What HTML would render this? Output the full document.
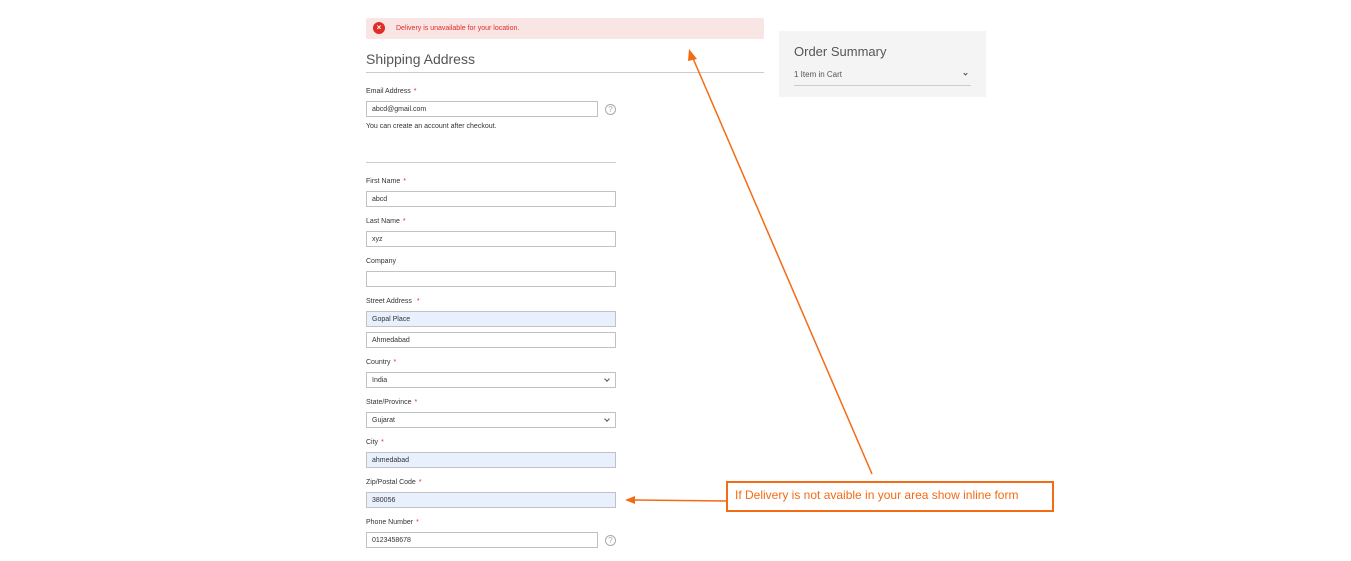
<!DOCTYPE html>
<html><head><meta charset="utf-8"><style>
*{margin:0;padding:0;box-sizing:border-box}
body{width:1351px;height:561px;background:#fff;position:relative;overflow:hidden;font-family:"Liberation Sans",sans-serif;color:#333}
.a{position:absolute}
.lbl{position:absolute;left:366px;font-size:7px;color:#333}
.lbl i{color:#e02b27;font-style:normal;margin-left:3px}
.in{position:absolute;left:366px;width:250px;height:16px;border:1px solid #c2c2c2;background:#fff;font-size:7px;padding-left:5px;display:flex;align-items:center}
.bl{background:#e8f0fe}
.sel:after{content:"";position:absolute;right:6px;top:4px;width:3px;height:3px;border-right:1px solid #555;border-bottom:1px solid #555;transform:rotate(45deg)}
.q{position:absolute;width:11px;height:11px;border:1px solid #aaa;border-radius:50%;font-size:8px;color:#aaa;text-align:center;line-height:9px}
</style></head><body>
<div class="a" style="left:366px;top:18px;width:398px;height:21px;background:#fae5e5;border-radius:2px"></div>
<div class="a" style="left:373px;top:22px;width:12px;height:12px;border-radius:50%;background:#e02b27;color:#fff;font-size:8px;font-weight:bold;text-align:center;line-height:12px">×</div>
<div class="a" style="left:396px;top:25px;font-size:7px;color:#e02b27">Delivery is unavailable for your location.</div>
<div class="a" style="left:366px;top:51px;font-size:14px;color:#555">Shipping Address</div>
<div class="a" style="left:366px;top:72px;width:398px;height:1px;background:#ccc"></div>

<div class="lbl" style="top:88px">Email Address<i>*</i></div>
<div class="in" style="top:101px;width:232px">abcd@gmail.com</div>
<div class="q" style="left:605px;top:104px">?</div>
<div class="lbl" style="top:123px">You can create an account after checkout.</div>
<div class="a" style="left:366px;top:162px;width:250px;height:1px;background:#ccc"></div>

<div class="lbl" style="top:178px">First Name<i>*</i></div>
<div class="in" style="top:191px">abcd</div>
<div class="lbl" style="top:218px">Last Name<i>*</i></div>
<div class="in" style="top:231px">xyz</div>
<div class="lbl" style="top:258px">Company</div>
<div class="in" style="top:271px"></div>
<div class="lbl" style="top:298px">Street Address <i>*</i></div>
<div class="in bl" style="top:311px">Gopal Place</div>
<div class="in" style="top:332px">Ahmedabad</div>
<div class="lbl" style="top:359px">Country<i>*</i></div>
<div class="in sel" style="top:372px">India</div>
<div class="lbl" style="top:399px">State/Province<i>*</i></div>
<div class="in sel" style="top:412px">Gujarat</div>
<div class="lbl" style="top:439px">City<i>*</i></div>
<div class="in bl" style="top:452px">ahmedabad</div>
<div class="lbl" style="top:479px">Zip/Postal Code<i>*</i></div>
<div class="in bl" style="top:492px">380056</div>
<div class="lbl" style="top:519px">Phone Number<i>*</i></div>
<div class="in" style="top:532px;width:232px">0123458678</div>
<div class="q" style="left:605px;top:535px">?</div>

<div class="a" style="left:779px;top:31px;width:207px;height:66px;background:#f4f4f4"></div>
<div class="a" style="left:794px;top:44px;font-size:13px;color:#555">Order Summary</div>
<div class="a" style="left:794px;top:70px;font-size:8px;color:#555">1 Item in Cart</div>
<div class="a" style="left:964px;top:72px;width:3px;height:3px;border-right:1px solid #555;border-bottom:1px solid #555;transform:rotate(45deg)"></div>
<div class="a" style="left:794px;top:85px;width:177px;height:1px;background:#ccc"></div>

<div class="a" style="left:726px;top:481px;width:328px;height:31px;border:2px solid #f36b14;color:#f36b14;font-size:12px;padding:5px 0 0 7px">If Delivery is not avaible in your area show inline form</div>
<svg class="a" style="left:0;top:0" width="1351" height="561">
<g stroke="#f36b14" stroke-width="1.5" fill="#f36b14">
<line x1="872" y1="474" x2="692" y2="56"/>
<polygon points="689,49 697,59 688,61" stroke="none"/>
<line x1="726" y1="501" x2="634" y2="500"/>
<polygon points="625,500 635,496 635,504" stroke="none"/>
</g></svg>
</body></html>
